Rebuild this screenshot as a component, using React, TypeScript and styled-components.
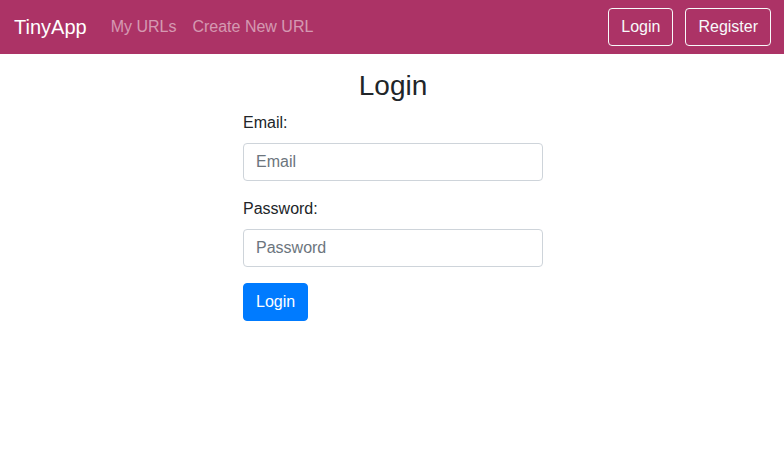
import React from "react";
import styled, { createGlobalStyle } from "styled-components";

const GlobalStyle = createGlobalStyle`
  * { box-sizing: border-box; }
  body {
    margin: 0;
    font-family: "Liberation Sans", Arial, sans-serif;
    font-size: 16px;
    line-height: 1.5;
    color: #212529;
    background: #fff;
  }
`;

const Navbar = styled.nav`
  display: flex;
  align-items: center;
  height: 54px;
  padding: 0 13px 1px 14px;
  background: #ac3366;
`;

const Brand = styled.a`
  font-size: 20px;
  color: #fff;
  margin-right: 16px;
  text-decoration: none;
`;

const NavLinks = styled.div`
  display: flex;
  flex: 1;
`;

const NavLink = styled.a`
  padding: 8px;
  color: rgba(255, 255, 255, 0.5);
  text-decoration: none;
`;

const NavActions = styled.div`
  display: flex;
  gap: 12px;
`;

const OutlineButton = styled.button`
  height: 38px;
  padding: 0 12px;
  font: inherit;
  color: #f8f9fa;
  background: transparent;
  border: 1px solid #f8f9fa;
  border-radius: 4px;
`;

const Main = styled.main`
  display: flex;
  flex-direction: column;
  align-items: center;
  padding: 15px 0 0 2px;
`;

const Title = styled.h3`
  margin: 0 0 8px;
  font-size: 28px;
  font-weight: 500;
  line-height: 1.2;
`;

const Form = styled.form`
  width: 300px;
`;

const FormGroup = styled.div`
  margin-bottom: 16px;
`;

const Label = styled.label`
  display: block;
  margin-bottom: 8px;
`;

const Input = styled.input`
  display: block;
  width: 100%;
  height: 38px;
  padding: 6px 12px;
  font: inherit;
  color: #495057;
  border: 1px solid #ced4da;
  border-radius: 4px;
  &::placeholder { color: #6c757d; }
`;

const PrimaryButton = styled.button`
  height: 38px;
  padding: 0 12px;
  font: inherit;
  color: #fff;
  background: #007bff;
  border: 1px solid #007bff;
  border-radius: 4px;
`;

export default function App() {
  return (
    <>
      <GlobalStyle />
      <Navbar>
        <Brand href="#">TinyApp</Brand>
        <NavLinks>
          <NavLink href="#">My URLs</NavLink>
          <NavLink href="#">Create New URL</NavLink>
        </NavLinks>
        <NavActions>
          <OutlineButton>Login</OutlineButton>
          <OutlineButton>Register</OutlineButton>
        </NavActions>
      </Navbar>
      <Main>
        <Title>Login</Title>
        <Form onSubmit={(e) => e.preventDefault()}>
          <FormGroup>
            <Label htmlFor="email">Email:</Label>
            <Input id="email" type="email" placeholder="Email" />
          </FormGroup>
          <FormGroup>
            <Label htmlFor="password">Password:</Label>
            <Input id="password" type="password" placeholder="Password" />
          </FormGroup>
          <PrimaryButton type="submit">Login</PrimaryButton>
        </Form>
      </Main>
    </>
  );
}
